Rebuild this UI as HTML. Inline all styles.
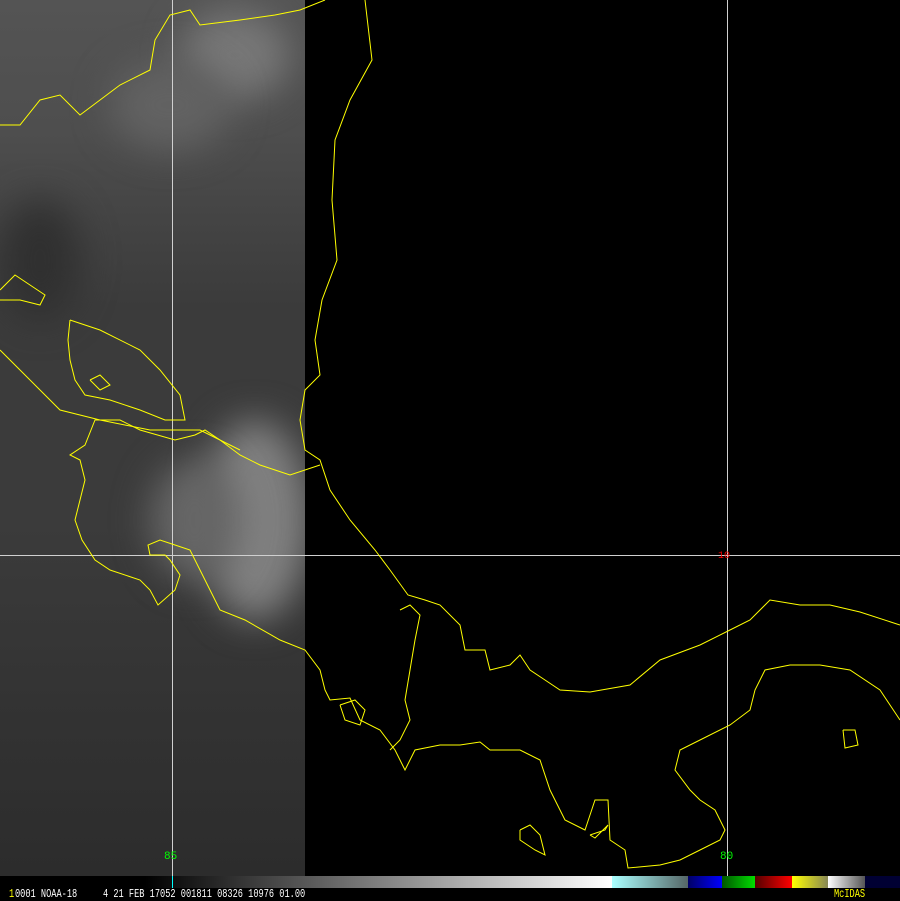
<!DOCTYPE html>
<html><head><style>
html,body{margin:0;padding:0;background:#000;width:900px;height:900px;overflow:hidden;font-family:"Liberation Mono",monospace}
#img{position:absolute;left:0;top:0;width:305px;height:876px;overflow:hidden;background:linear-gradient(180deg,#545454 0%,#4e4e4e 15%,#444 25%,#3b3b3b 35%,#3b3b3b 60%,#333 80%,#2c2c2c 100%)}
.c{position:absolute;border-radius:50%;filter:blur(18px)}
#bar{position:absolute;left:0;top:876px;width:900px;height:12px;background:#000}
.t{position:absolute;top:888px;font-size:12px;line-height:12px;white-space:pre;color:#fff;transform:scaleX(0.72);transform-origin:left top}
</style></head><body>
<div id="img">
<div class="c" style="left:180px;top:10px;width:110px;height:90px;background:#777"></div>
<div class="c" style="left:110px;top:60px;width:120px;height:90px;background:#626262"></div>
<div class="c" style="left:200px;top:420px;width:110px;height:200px;background:#808080"></div>
<div class="c" style="left:150px;top:460px;width:90px;height:120px;background:#666"></div>
<div class="c" style="left:0px;top:200px;width:80px;height:120px;background:#303030"></div>
</div>
<svg width="900" height="900" style="position:absolute;left:0;top:0">
<g stroke="#d0d0d0" stroke-width="1" fill="none">
<line x1="172.5" y1="0" x2="172.5" y2="876"/><line x1="727.5" y1="0" x2="727.5" y2="876"/><line x1="0" y1="555.5" x2="900" y2="555.5"/>
</g>
<g stroke="#ffff00" stroke-width="1" fill="none">
<polyline points="365,0 372,60 350,100 335,140 332,200 337,260 322,300 315,340 320,375 305,390 300,420 305,450 320,460 330,490 350,520 375,550 390,570 408,595 425,600 440,605 460,625 465,650 485,650 490,670 510,665 520,655 530,670 545,680 560,690 590,692 630,685 660,660 700,645 730,630 750,620 770,600 800,605 830,605 860,612 900,625"/>
<polyline points="900,720 880,690 850,670 820,665 790,665 765,670 755,690 750,710 730,725 700,740 680,750 675,770 690,790 700,800 715,810 725,830 720,840 700,850 680,860 660,865 628,868 625,850 610,840 608,800 595,800 590,815 585,830 565,820 560,810 550,790 540,760 520,750 490,750 480,742 460,745 440,745 415,750 405,770 395,750 380,730 360,720 350,698 330,700 325,690 320,670 305,650 280,640 245,620 220,610 200,570 190,550 175,545 160,540 148,545 150,555 165,555 170,560 180,575 175,590 158,605 150,590 140,580 110,570 95,560 82,540 75,520 80,500 85,480 80,460 70,455 85,445 95,420 120,420 140,430 175,440 195,435 205,430 220,440 240,455 260,465 290,475 320,465"/>
<polyline points="0,350 20,370 40,390 60,410 100,420 150,430 200,430 240,450"/>
<polyline points="70,320 100,330 140,350 160,370 180,395 185,420 165,420 140,410 110,400 85,395 75,380 70,360 68,340 70,320"/>
<polyline points="90,380 100,375 110,385 100,390 90,380"/>
<polyline points="0,290 15,275 30,285 45,295 40,305 20,300 0,300"/>
<polyline points="0,125 20,125 40,100 60,95 80,115 100,100 120,85 150,70 155,40 170,15 190,10 200,25 240,20 275,15 300,10 325,0"/>
<polyline points="400,610 410,605 420,615 415,640 410,670 405,700 410,720 400,740 390,750"/>
<polyline points="340,705 355,700 365,710 360,725 345,720 340,705"/>
<polyline points="520,830 530,825 540,835 545,855 535,850 520,840 520,830"/>
<polyline points="843,730 855,730 858,745 845,748 843,730"/>
<polyline points="590,835 605,830 608,825 595,838 590,835"/>
</g>
<text x="164" y="859" fill="#00ff00" font-family="Liberation Mono" font-size="11">85</text>
<text x="720" y="859" fill="#00ff00" font-family="Liberation Mono" font-size="11">80</text>
<text x="718" y="558" fill="#ff0000" font-family="Liberation Mono" font-size="10">10</text>
</svg>
<div id="bar">
<div style="position:absolute;left:145px;width:467px;height:12px;background:linear-gradient(90deg,#000,#fff)"></div>
<div style="position:absolute;left:612px;width:76px;height:12px;background:linear-gradient(90deg,#aff,#566)"></div>
<div style="position:absolute;left:688px;width:34px;height:12px;background:linear-gradient(90deg,#006,#00f)"></div>
<div style="position:absolute;left:722px;width:33px;height:12px;background:linear-gradient(90deg,#050,#0d0)"></div>
<div style="position:absolute;left:755px;width:37px;height:12px;background:linear-gradient(90deg,#500,#f00)"></div>
<div style="position:absolute;left:792px;width:36px;height:12px;background:linear-gradient(90deg,#ff0,#885)"></div>
<div style="position:absolute;left:828px;width:37px;height:12px;background:linear-gradient(90deg,#fff,#555)"></div>
<div style="position:absolute;left:865px;width:35px;height:12px;background:#003"></div>
<div style="position:absolute;left:172px;width:1px;height:12px;background:#0ff"></div>
</div>
<div class="t" style="left:9px;color:#ff0">1</div>
<div class="t" style="left:15px">0001 NOAA-18</div>
<div class="t" style="left:103px">4 21 FEB 17052 001811 08326 10976 01.00</div>
<div class="t" style="left:834px;color:#ff0">McIDAS</div>
</body></html>
